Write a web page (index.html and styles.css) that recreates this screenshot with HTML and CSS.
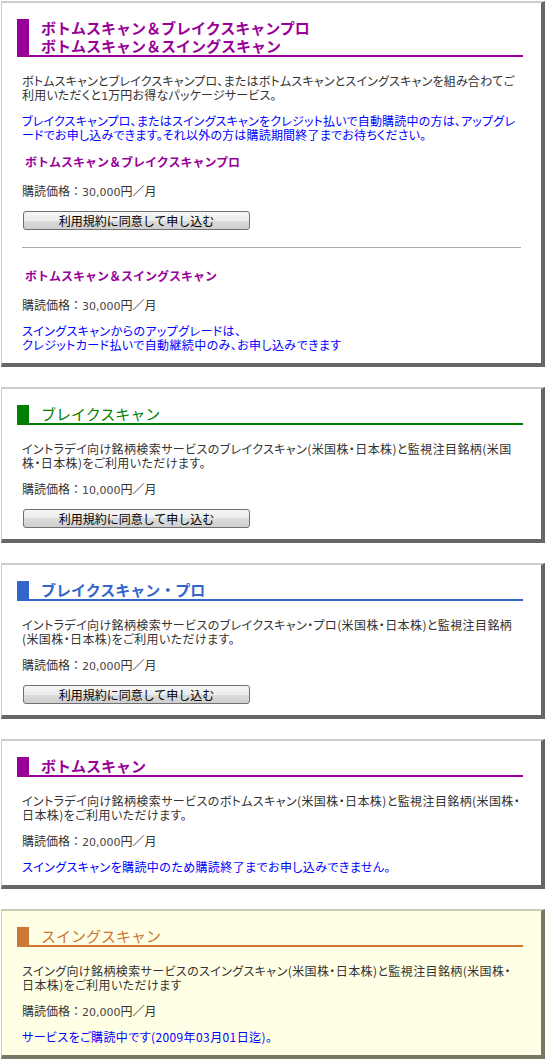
FILE: index.html
```html
<!DOCTYPE html>
<html lang="ja">
<head>
  <meta charset="UTF-8">
  <title>サービス一覧</title>
  <link rel="stylesheet" href="styles.css">
</head>
<body>
  <div class="box">
    <h2 class="head purple">ボトムスキャン＆ブレイクスキャンプロ<br>ボトムスキャン＆スイングスキャン</h2>
    <p class="lead">ボトムスキャンとブレイクスキャンプロ、またはボトムスキャンとスイングスキャンを組み合わてご利用いただくと<span class="num">1</span>万円お得なパッケージサービス。</p>
    <p class="note lead">ブレイクスキャンプロ、またはスイングスキャンをクレジット払いで自動購読中の方は、アップグレードでお申し込みできます。それ以外の方は購読期間終了までお待ちください。</p>
    <h3 class="sub">ボトムスキャン＆ブレイクスキャンプロ</h3>
    <p class="price">購読価格：<span class="num">30,000</span>円／月</p>
    <div class="action"><button type="button">利用規約に同意して申し込む</button></div>
    <hr>
    <h3 class="sub">ボトムスキャン＆スイングスキャン</h3>
    <p class="price">購読価格：<span class="num">30,000</span>円／月</p>
    <p class="note">スイングスキャンからのアップグレードは、<br>クレジットカード払いで自動継続中のみ、お申し込みできます</p>
  </div>

  <div class="box">
    <h2 class="head green">ブレイクスキャン</h2>
    <p>イントラデイ向け銘柄検索サービスのブレイクスキャン(米国株・日本株)と監視注目銘柄(米国株・日本株)をご利用いただけます。</p>
    <p class="price">購読価格：<span class="num">10,000</span>円／月</p>
    <div class="action"><button type="button">利用規約に同意して申し込む</button></div>
  </div>

  <div class="box">
    <h2 class="head blue">ブレイクスキャン・プロ</h2>
    <p>イントラデイ向け銘柄検索サービスのブレイクスキャン・プロ(米国株・日本株)と監視注目銘柄(米国株・日本株)をご利用いただけます。</p>
    <p class="price">購読価格：<span class="num">20,000</span>円／月</p>
    <div class="action"><button type="button">利用規約に同意して申し込む</button></div>
  </div>

  <div class="box">
    <h2 class="head purple">ボトムスキャン</h2>
    <p>イントラデイ向け銘柄検索サービスのボトムスキャン(米国株・日本株)と監視注目銘柄(米国株・日本株)をご利用いただけます。</p>
    <p class="price">購読価格：<span class="num">20,000</span>円／月</p>
    <p class="note">スイングスキャンを購読中のため購読終了までお申し込みできません。</p>
  </div>

  <div class="box current">
    <h2 class="head orange">スイングスキャン</h2>
    <p>スイング向け銘柄検索サービスのスイングスキャン(米国株・日本株)と監視注目銘柄(米国株・日本株)をご利用いただけます</p>
    <p class="price">購読価格：<span class="num">20,000</span>円／月</p>
    <p class="note">サービスをご購読中です(2009年03月01日迄)。</p>
  </div>
</body>
</html>
```

FILE: styles.css
```css
body {
  margin: 0;
  padding: 1px 0 0 1px;
  font-family: "Noto Sans CJK JP", "Liberation Sans", sans-serif;
  font-size: 12px;
  line-height: 14px;
  color: #333;
  background: #fff;
  font-feature-settings: "palt";
}
.box {
  margin-bottom: 20px;
  padding: 16px 20px 11px 20px;
  background: #fff;
  border-style: solid;
  border-color: #ccc #666 #666 #ccc;
  border-width: 2px 4px 4px 1px;
}
.box.current {
  background: #ffffe5;
  border-color: #cccbb8 #777766 #777766 #cccbb8;
}
.box > :last-child {
  margin-bottom: 0;
}
.head {
  margin: 0 -2px 17px -5px;
  padding-left: 12px;
  font-size: 15px;
  line-height: 18px;
  font-weight: bold;
  font-feature-settings: normal;
  border-left: 12px solid;
  border-bottom: 2px solid;
}
.purple { color: #990099; border-color: #990099; }
.green { color: #008000; border-color: #008000; font-weight: normal; }
.blue { color: #3366cc; border-color: #3366cc; }
.orange { color: #cc7733; border-color: #cc7733; font-weight: normal; }
p {
  margin: 12px 0;
  letter-spacing: 0.4px;
}
p.lead {
  letter-spacing: 0.2px;
}
p.price {
  letter-spacing: 0;
  font-feature-settings: normal;
}
.note {
  color: #0000ff;
}
.num {
  font-family: "DejaVu Sans", sans-serif;
  font-size: 11px;
  line-height: 0;
  letter-spacing: 0;
  color: #444;
}
.sub {
  margin: 13px 0 15px;
  padding-left: 3px;
  font-size: 12px;
  line-height: 14px;
  font-feature-settings: normal;
  color: #990099;
}
.action {
  margin: 13px 0;
}
button {
  width: 227px;
  height: 19px;
  margin-left: 1px;
  padding: 0;
  font-family: inherit;
  font-size: 12px;
  line-height: 14px;
  color: #000;
  border: 1px solid #707070;
  border-radius: 3px;
  background: linear-gradient(#f6f6f6, #ececec 50%, #dcdcdc 50%, #cfcfcf);
  vertical-align: top;
}
hr {
  margin: 17px 0 21px;
  border: 0;
  border-top: 1px solid #aaa;
}
```
